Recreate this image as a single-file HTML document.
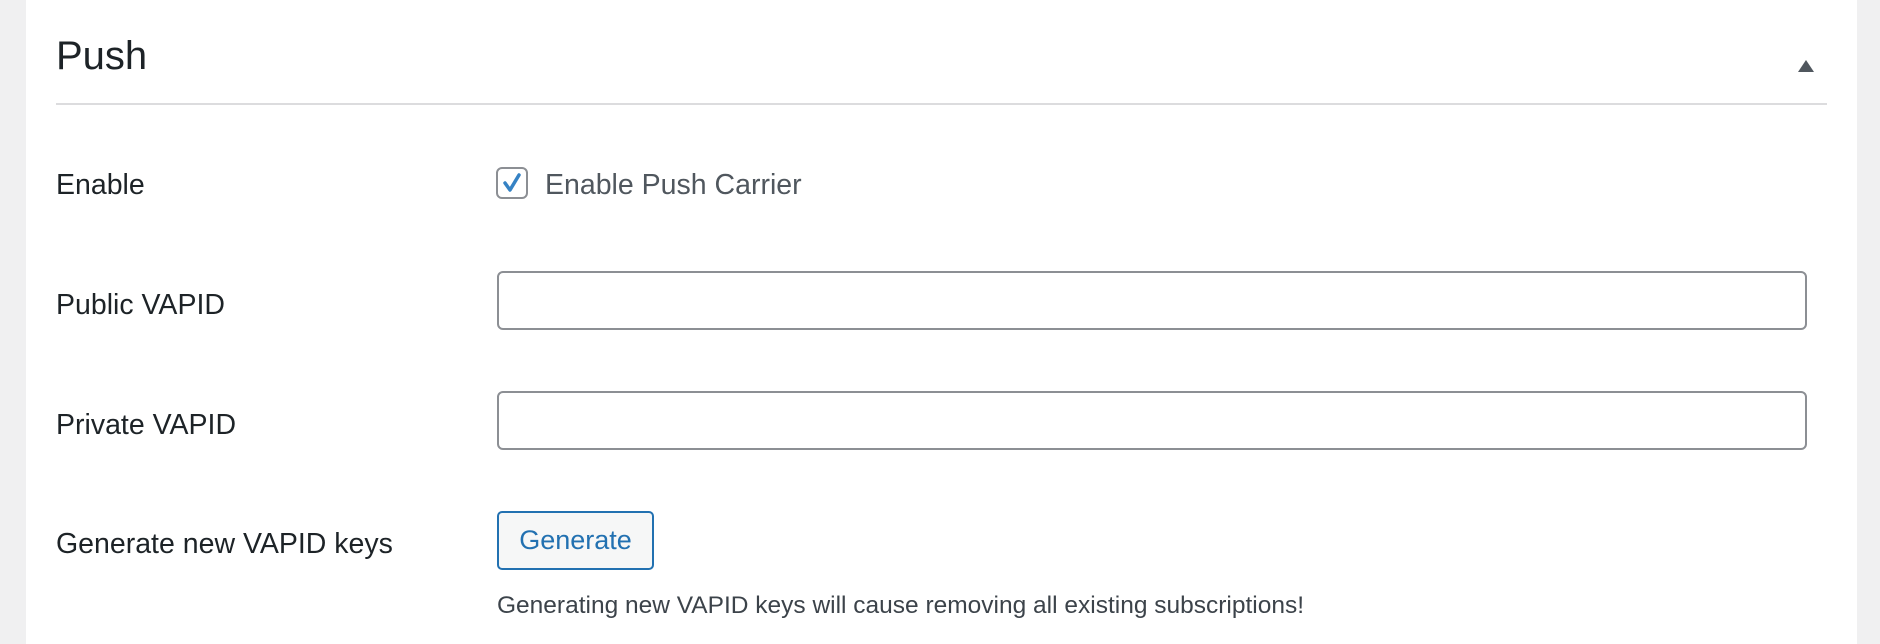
<!DOCTYPE html>
<html><head><meta charset="utf-8"><style>
html,body{margin:0;padding:0;}
body{width:1880px;height:644px;background:#f0f0f1;position:relative;overflow:hidden;font-family:"Liberation Sans",sans-serif;}
.card{position:absolute;left:26px;top:0;width:1831px;height:644px;background:#fff;}
.t{position:absolute;white-space:nowrap;line-height:1;}
.lbl{font-size:28.5px;color:#1d2327;left:56px;}
.inp{position:absolute;left:497px;width:1306px;height:55px;border:2px solid #8c8f94;border-radius:6px;background:#fff;}
</style></head><body>
<div class="card"></div>
<div class="t" style="left:56px;top:36px;font-size:40px;color:#1d2327;">Push</div>
<div style="position:absolute;left:56px;top:103px;width:1771px;height:2px;background:#dcdcde;"></div>
<svg style="position:absolute;left:1797px;top:59px" width="18" height="14"><polygon points="1,13 9,1 17,13" fill="#50575e"/></svg>

<div class="t lbl" style="top:171px;">Enable</div>
<div style="position:absolute;left:496px;top:167px;width:28px;height:28px;border:2px solid #8c8f94;border-radius:6px;background:#fff;"></div>
<svg style="position:absolute;left:496px;top:167px" width="32" height="32"><path d="M9 16 L14 23 L23 8" stroke="#3582c4" stroke-width="3.5" fill="none" stroke-linecap="round" stroke-linejoin="round"/></svg>
<div class="t" style="left:545px;top:171px;font-size:28.5px;color:#50575e;">Enable Push Carrier</div>

<div class="t lbl" style="top:291px;">Public VAPID</div>
<div class="inp" style="top:271px;"></div>

<div class="t lbl" style="top:411px;">Private VAPID</div>
<div class="inp" style="top:391px;"></div>

<div class="t lbl" style="top:530px;">Generate new VAPID keys</div>
<div style="position:absolute;left:497px;top:511px;width:153px;height:55px;border:2px solid #2271b1;border-radius:5px;background:#f6f7f7;color:#2271b1;font-size:27px;line-height:55px;text-align:center;">Generate</div>
<div class="t" style="left:497px;top:594px;font-size:24.5px;color:#3c434a;">Generating new VAPID keys will cause removing all existing subscriptions!</div>
</body></html>
